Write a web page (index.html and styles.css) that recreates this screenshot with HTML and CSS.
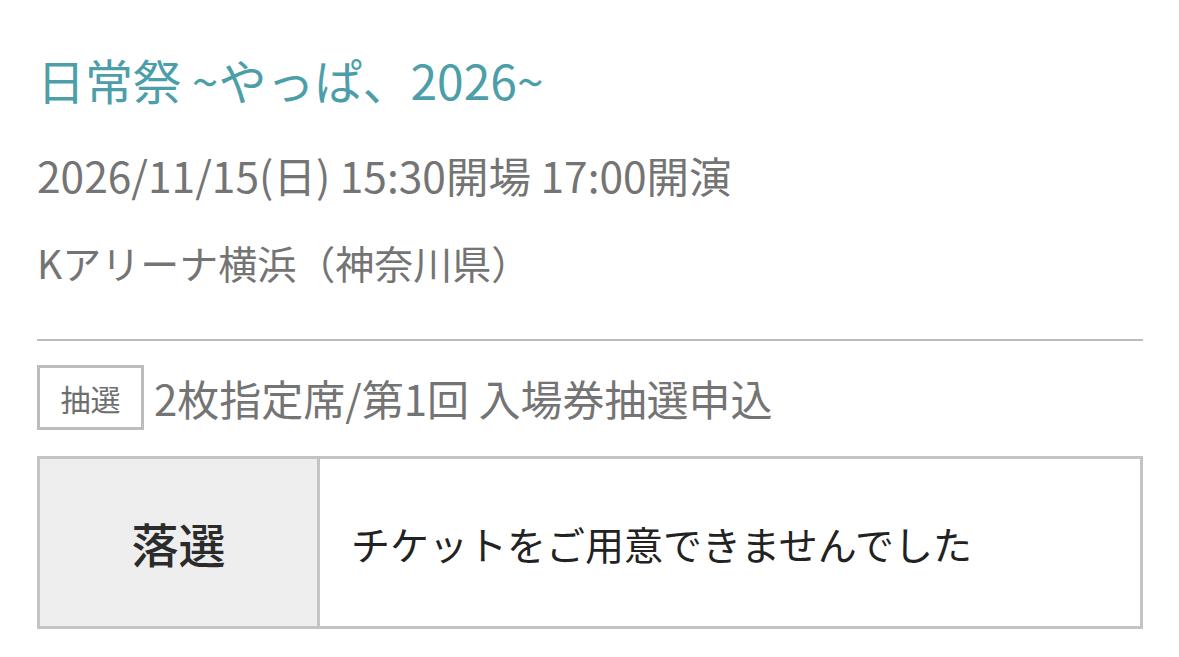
FILE: index.html
```html
<!DOCTYPE html>
<html lang="ja">

<head>
    <meta charset="UTF-8">
    <meta name="viewport" content="width=device-width, initial-scale=1.0">
    <title>抽選結果</title>
    <link rel="stylesheet" href="styles.css">
</head>

<body>
    <div class="container">
        <!-- Event info -->
        <div class="event">
            <h1 class="event-title">日常祭 ~やっぱ、2026~</h1>
            <p class="event-date">2026/11/15(日) 15:30開場 17:00開演</p>
            <p class="event-venue">Kアリーナ横浜（神奈川県）</p>
        </div>

        <!-- Lottery result -->
        <div class="entry">
            <div class="entry-head">
                <span class="badge">抽選</span>
                <span class="entry-name">2枚指定席/第1回 入場券抽選申込</span>
            </div>

            <div class="result">
                <div class="result-status">落選</div>
                <div class="result-message">チケットをご用意できませんでした</div>
            </div>
        </div>
    </div>
</body>

</html>
```

FILE: styles.css
```css
/* Page */
body {
    font-family: "Noto Sans CJK JP", "Noto Sans", sans-serif;
    background-color: #fff;
    margin: 0;
    padding: 0;
}

.container {
    padding: 0 36px 0 37px;
}

/* Event info */
.event {
    padding-top: 49px;
    padding-bottom: 51px;
    border-bottom: 2px solid #bdbdbd;
}

.event-title {
    margin: 0;
    font-size: 48px;
    font-weight: 400;
    line-height: 60px;
    color: #4c9fa9;
}

.event-date {
    margin: 38px 0 0 0;
    font-size: 42.5px;
    line-height: 56px;
    color: #747474;
}

.event-venue {
    margin: 33px 0 0 0;
    font-size: 39px;
    line-height: 52px;
    color: #747474;
}

/* Entry */
.entry {
    padding-top: 24px;
}

.entry-head {
    display: flex;
    align-items: center;
    gap: 10px;
}

.badge {
    display: flex;
    align-items: center;
    justify-content: center;
    box-sizing: border-box;
    width: 107px;
    height: 65px;
    border: 3px solid #bdbdbd;
    font-size: 30px;
    color: #6e6e6e;
}

.entry-name {
    font-size: 42px;
    color: #747474;
}

/* Result table */
.result {
    display: flex;
    margin-top: 26px;
    height: 173px;
    box-sizing: border-box;
    border: 3px solid #c4c4c4;
}

.result-status {
    display: flex;
    align-items: center;
    justify-content: center;
    width: 277px;
    background-color: #eeeeee;
    border-right: 3px solid #c4c4c4;
    font-size: 47px;
    font-weight: 500;
    color: #2b2b2b;
}

.result-message {
    display: flex;
    align-items: center;
    padding-left: 31px;
    font-size: 39px;
    color: #222;
}
```
